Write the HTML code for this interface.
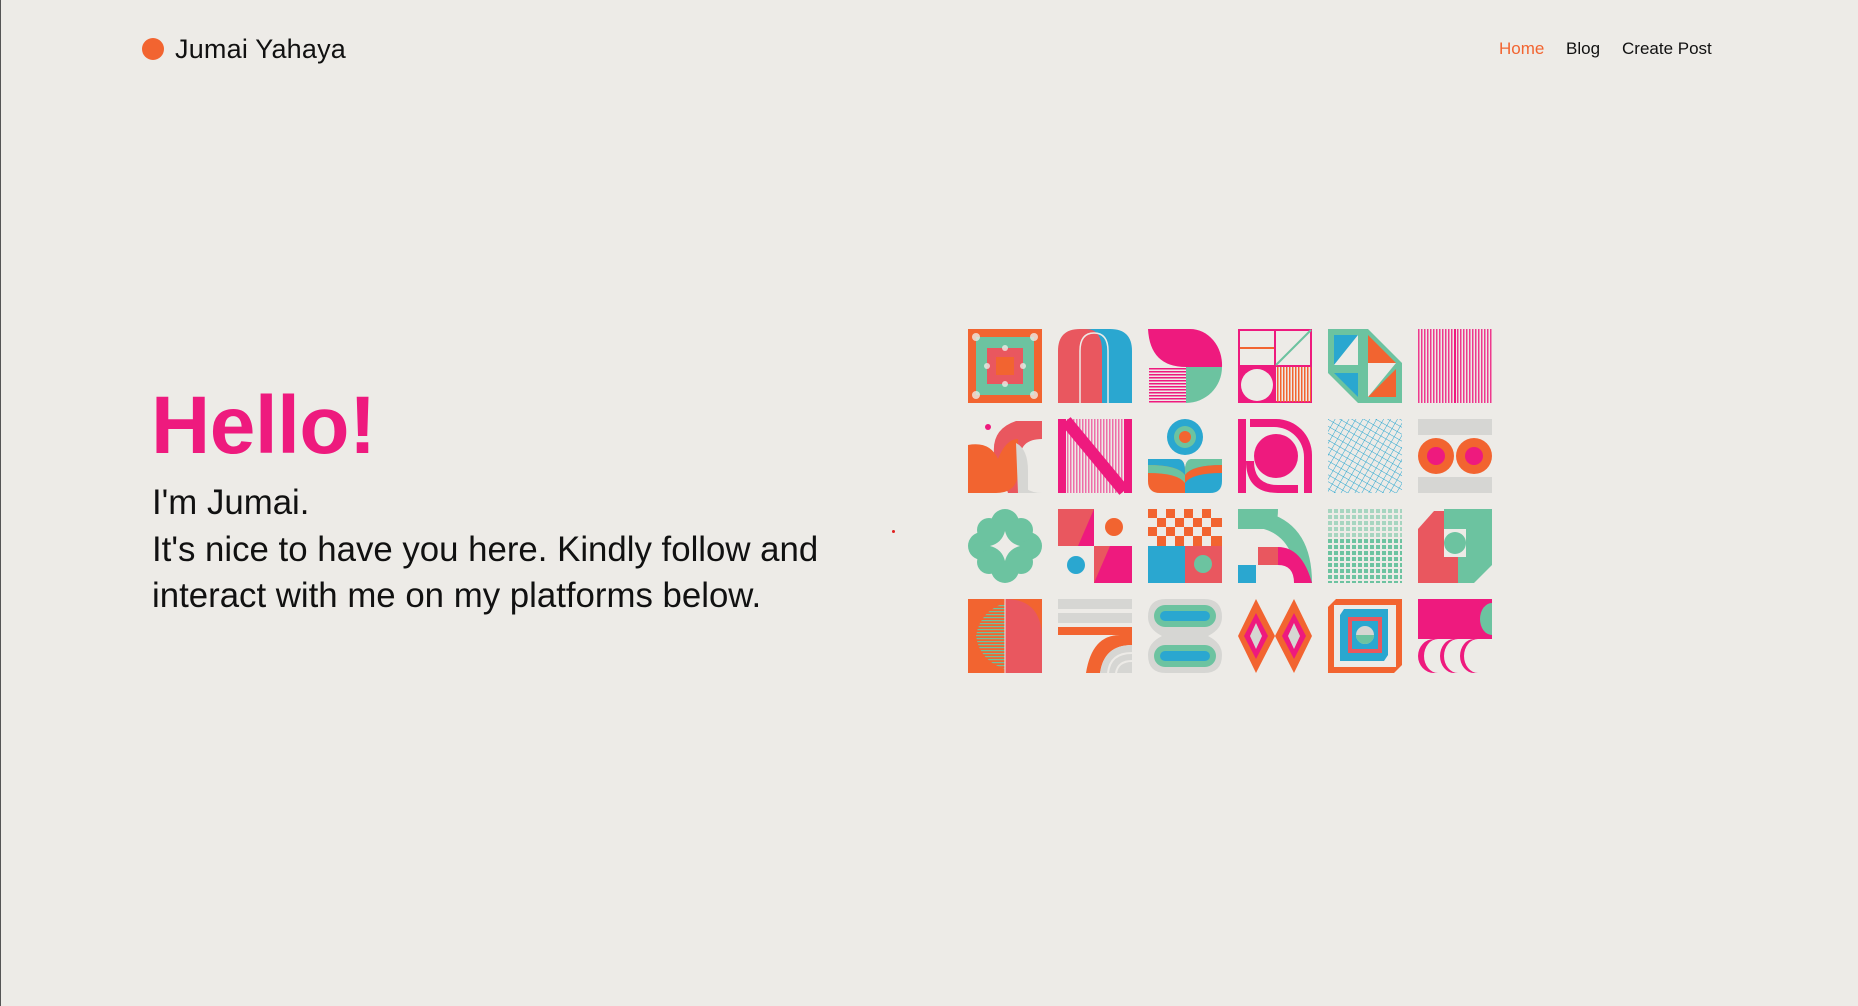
<!DOCTYPE html>
<html><head><meta charset="utf-8"><style>
html,body{margin:0;padding:0}
body{width:1858px;height:1006px;background:#edebe7;position:relative;overflow:hidden;font-family:"Liberation Sans",sans-serif;color:#111;border-left:1px solid #555;box-sizing:border-box}
.a{position:absolute;white-space:nowrap}
</style></head><body>
<div class="a" style="left:141px;top:38px;width:22px;height:22px;border-radius:50%;background:#f26430"></div>
<div class="a" style="left:174px;top:33px;font-size:27px;line-height:32px;letter-spacing:0.2px">Jumai Yahaya</div>
<div class="a" style="left:1498px;top:39px;font-size:17px;color:#f26430">Home</div>
<div class="a" style="left:1565px;top:39px;font-size:17px">Blog</div>
<div class="a" style="left:1621px;top:39px;font-size:17px">Create Post</div>
<div class="a" style="left:150px;top:381px;font-size:82px;font-weight:bold;color:#ee1a7e;letter-spacing:-0.5px;line-height:90px">Hello!</div>
<div class="a" style="left:151px;top:480px;font-size:34.8px;line-height:46.5px">I'm Jumai.<br>It's nice to have you here. Kindly follow and<br>interact with me on my platforms below.</div>
<div class="a" style="left:891px;top:530px;width:3px;height:3px;background:#e02020;border-radius:50%"></div>
<svg class="a" style="left:967px;top:329px" width="530" height="350" viewBox="0 0 530 350">
<defs>
<pattern id="hs" width="4" height="3" patternUnits="userSpaceOnUse"><rect width="4" height="1.5" fill="#ee1a7e"/></pattern>
<pattern id="vs" width="3" height="4" patternUnits="userSpaceOnUse"><rect width="1.5" height="4" fill="#ee1a7e"/></pattern>
<pattern id="vo" width="3" height="4" patternUnits="userSpaceOnUse"><rect width="1.5" height="4" fill="#f26430"/></pattern>
<pattern id="gd" width="6" height="6" patternUnits="userSpaceOnUse"><rect width="4" height="4" fill="#6cc3a0"/></pattern>
<pattern id="bx" width="6" height="6" patternUnits="userSpaceOnUse" patternTransform="rotate(30)"><path d="M0 0H6M0 0V6" stroke="#2aa7d0" stroke-width="1" fill="none"/></pattern>
<pattern id="ho" width="4" height="3" patternUnits="userSpaceOnUse"><rect width="4" height="1.2" fill="#6cc3a0"/></pattern>
</defs>
<!-- row 0 -->
<g><rect width="74" height="74" fill="#f26430"/><rect x="8" y="8" width="58" height="58" fill="#6cc3a0"/><rect x="19" y="19" width="36" height="36" fill="#e9575f"/><rect x="28" y="28" width="18" height="18" fill="#f26430"/>
<g fill="#edebe7" opacity=".8"><circle cx="8" cy="8" r="4"/><circle cx="66" cy="8" r="4"/><circle cx="8" cy="66" r="4"/><circle cx="66" cy="66" r="4"/><circle cx="37" cy="19" r="3"/><circle cx="37" cy="55" r="3"/><circle cx="19" cy="37" r="3"/><circle cx="55" cy="37" r="3"/></g></g>
<g transform="translate(90,0)"><path d="M22 0H52Q74 0 74 22V74H22Z" fill="#2aa7d0"/><path d="M0 74V22Q0 0 22 0H28Q44 0 44 22V74Z" fill="#e9575f"/><path d="M22 74V22Q22 4 36 4Q50 4 50 22V74" stroke="#edebe7" stroke-width="1.5" fill="none"/></g>
<g transform="translate(180,0)"><path d="M0 0H42A32 36 0 0 1 74 38H38Q2 38 0 0Z" fill="#ee1a7e"/><path d="M38 38H74A36 36 0 0 1 38 74Z" fill="#6cc3a0"/><rect x="1" y="38" width="37" height="36" fill="url(#hs)"/></g>
<g transform="translate(270,0)"><rect x="1" y="1" width="72" height="72" fill="#edebe7" stroke="#ee1a7e" stroke-width="2"/><path d="M37 0V74M0 37H74" stroke="#ee1a7e" stroke-width="2"/><rect x="1" y="37" width="36" height="36" fill="#ee1a7e"/><circle cx="19" cy="56" r="16" fill="#edebe7"/><rect x="38" y="38" width="35" height="35" fill="url(#vo)"/><path d="M38 36L73 1" stroke="#6cc3a0" stroke-width="2"/><path d="M2 19H36" stroke="#f26430" stroke-width="2"/></g>
<g transform="translate(360,0)"><path d="M0 0H40L74 34V74H30L0 44Z" fill="#6cc3a0"/><path d="M6 6H30L6 36Z" fill="#2aa7d0"/><path d="M40 6L68 34H40Z" fill="#f26430"/><path d="M6 44H30V68Z" fill="#2aa7d0"/><path d="M68 40V68H40Z" fill="#f26430"/><path d="M30 6L6 36H30ZM40 34H68L40 68Z" fill="#edebe7"/></g>
<g transform="translate(450,0)"><rect width="74" height="74" fill="url(#vs)" opacity=".85"/><path d="M37 0V74" stroke="#ee1a7e" stroke-width="2"/></g>
<!-- row 1 -->
<g transform="translate(0,90)"><path d="M44 74V30Q44 74 74 74Z" fill="#d6d6d3"/><path d="M40 74H52V40Q52 20 74 20V2H48Q24 10 26 34Z" fill="#e9575f"/><path d="M0 26Q22 22 30 40Q38 20 50 20V52Q50 74 28 74H0Z" fill="#f26430"/><path d="M48 24Q60 30 60 52V74H50Z" fill="#d6d6d3"/><circle cx="20" cy="8" r="3" fill="#ee1a7e"/></g>
<g transform="translate(90,90)"><rect width="74" height="74" fill="url(#vs)" opacity=".6"/><path d="M4 0V74M70 0V74" stroke="#ee1a7e" stroke-width="8"/><path d="M8 2L66 72" stroke="#ee1a7e" stroke-width="12"/></g>
<g transform="translate(180,90)"><circle cx="37" cy="18" r="18" fill="#2aa7d0"/><circle cx="37" cy="18" r="11" fill="#6cc3a0"/><circle cx="37" cy="18" r="6" fill="#f26430"/><path d="M0 40H30Q37 40 37 52V74H12Q0 74 0 62Z" fill="#f26430"/><path d="M0 40H30Q37 40 37 52V56Q30 46 0 46Z" fill="#2aa7d0"/><path d="M0 46Q30 46 37 56V64Q30 54 0 54Z" fill="#6cc3a0"/><path d="M74 40H44Q37 40 37 52V74H62Q74 74 74 62Z" fill="#2aa7d0"/><path d="M74 40H44Q37 40 37 52V56Q44 46 74 46Z" fill="#6cc3a0"/><path d="M74 46Q44 46 37 56V64Q44 54 74 54Z" fill="#f26430"/></g>
<g transform="translate(270,90)" fill="#ee1a7e"><rect x="0" y="0" width="8" height="74"/><path d="M12 0H38A36 36 0 0 1 74 36V74H66V38A30 30 0 0 0 36 8H12Z"/><path d="M8 42Q8 74 40 74H60V66H40Q16 66 16 42Z"/><circle cx="38" cy="37" r="22"/></g>
<g transform="translate(360,90)"><rect width="74" height="74" fill="url(#bx)"/></g>
<g transform="translate(450,90)"><rect y="0" width="74" height="16" fill="#d6d6d3"/><rect y="58" width="74" height="16" fill="#d6d6d3"/><circle cx="18" cy="37" r="18" fill="#f26430"/><circle cx="56" cy="37" r="18" fill="#f26430"/><circle cx="18" cy="37" r="9" fill="#ee1a7e"/><circle cx="56" cy="37" r="9" fill="#ee1a7e"/></g>
<!-- row 2 -->
<g transform="translate(0,180)"><g fill="#6cc3a0"><circle cx="37" cy="37" r="26"/><circle cx="37" cy="14" r="14"/><circle cx="37" cy="60" r="14"/><circle cx="14" cy="37" r="14"/><circle cx="60" cy="37" r="14"/><circle cx="21" cy="21" r="12"/><circle cx="53" cy="21" r="12"/><circle cx="21" cy="53" r="12"/><circle cx="53" cy="53" r="12"/></g><path d="M37 22Q40 34 52 37Q40 40 37 52Q34 40 22 37Q34 34 37 22Z" fill="#edebe7"/></g>
<g transform="translate(90,180)"><rect width="36" height="37" fill="#e9575f"/><path d="M36 0V37H20Z" fill="#ee1a7e"/><rect x="36" y="37" width="38" height="37" fill="#ee1a7e"/><path d="M36 37H52L36 74Z" fill="#e9575f"/><circle cx="56" cy="18" r="9" fill="#f26430"/><circle cx="18" cy="56" r="9" fill="#2aa7d0"/></g>
<g transform="translate(180,180)"><rect width="74" height="37" fill="#edebe7"/><g fill="#f26430"><rect x="0" y="0" width="9" height="9"/><rect x="18" y="0" width="9" height="9"/><rect x="36" y="0" width="9" height="9"/><rect x="54" y="0" width="9" height="9"/><rect x="9" y="9" width="9" height="9"/><rect x="27" y="9" width="9" height="9"/><rect x="45" y="9" width="9" height="9"/><rect x="63" y="9" width="11" height="9"/><rect x="0" y="18" width="9" height="9"/><rect x="18" y="18" width="9" height="9"/><rect x="36" y="18" width="9" height="9"/><rect x="54" y="18" width="9" height="9"/><rect x="9" y="27" width="9" height="10"/><rect x="27" y="27" width="9" height="10"/><rect x="45" y="27" width="9" height="10"/><rect x="63" y="27" width="11" height="10"/></g><rect y="37" width="37" height="37" fill="#2aa7d0"/><rect x="37" y="37" width="37" height="37" fill="#e9575f"/><circle cx="55" cy="55" r="9" fill="#6cc3a0"/></g>
<g transform="translate(270,180)"><path d="M0 0Q74 0 74 74H58Q58 30 26 20V0Z" fill="#6cc3a0"/><path d="M0 0V20H14Q24 20 26 20Q40 24 40 0Z" fill="#6cc3a0"/><rect x="20" y="38" width="20" height="18" fill="#e9575f"/><path d="M40 38Q64 38 74 74H56Q56 56 40 56Z" fill="#ee1a7e"/><rect x="0" y="56" width="18" height="18" fill="#2aa7d0"/></g>
<g transform="translate(360,180)"><rect width="74" height="74" fill="url(#gd)"/><rect width="74" height="30" fill="#edebe7" opacity=".45"/></g>
<g transform="translate(450,180)"><path d="M0 20L20 0H74V20Z" fill="#edebe7"/><path d="M0 20L16 2H40V74H0Z" fill="#e9575f"/><path d="M26 0H74V56L56 74H40V48H26Z" fill="#6cc3a0"/><path d="M26 20H48V48H26Z" fill="#edebe7"/><circle cx="37" cy="34" r="11" fill="#6cc3a0"/><rect x="26" y="48" width="14" height="26" fill="#e9575f"/></g>
<!-- row 3 -->
<g transform="translate(0,270)"><rect width="74" height="74" fill="#f26430"/><path d="M37 0Q74 0 74 40V74H37Z" fill="#e9575f"/><path d="M37 4Q12 12 8 37Q12 62 37 70Z" fill="url(#ho)"/><path d="M37 0V74" stroke="#edebe7" stroke-width="1"/></g>
<g transform="translate(90,270)"><rect y="0" width="74" height="10" fill="#d6d6d3"/><rect y="14" width="74" height="10" fill="#d6d6d3"/><rect y="28" width="74" height="8" fill="#f26430"/><path d="M74 36H62Q34 36 28 74H42Q46 46 74 46Z" fill="#f26430"/><path d="M74 46Q46 46 42 74H74Z" fill="#d6d6d3"/><path d="M74 54Q52 54 50 74M74 62Q60 62 58 74" stroke="#edebe7" stroke-width="2" fill="none"/></g>
<g transform="translate(180,270)"><path d="M0 18Q0 0 18 0H56Q74 0 74 18Q74 30 60 37Q74 44 74 56Q74 74 56 74H18Q0 74 0 56Q0 44 14 37Q0 30 0 18Z" fill="#d6d6d3"/><rect x="6" y="6" width="62" height="22" rx="11" fill="#6cc3a0"/><rect x="12" y="12" width="50" height="10" rx="5" fill="#2aa7d0"/><rect x="6" y="46" width="62" height="22" rx="11" fill="#6cc3a0"/><rect x="12" y="52" width="50" height="10" rx="5" fill="#2aa7d0"/></g>
<g transform="translate(270,270)"><path d="M18 0L37 37L18 74L0 37Z" fill="#f26430"/><path d="M56 0L74 37L56 74L37 37Z" fill="#f26430"/><path d="M18 14L30 37L18 60L6 37Z" fill="#ee1a7e"/><path d="M56 14L68 37L56 60L44 37Z" fill="#ee1a7e"/><path d="M18 24L24 37L18 50L12 37Z" fill="#d6d6d3"/><path d="M56 24L62 37L56 50L50 37Z" fill="#d6d6d3"/></g>
<g transform="translate(360,270)"><path d="M0 8L8 0H74V66L66 74H0Z" fill="#f26430"/><rect x="6" y="6" width="62" height="62" fill="#edebe7"/><path d="M12 16L16 10H60V56L56 62H12Z" fill="#2aa7d0"/><rect x="20" y="18" width="34" height="36" fill="#e9575f"/><rect x="24" y="22" width="26" height="28" fill="#2aa7d0"/><circle cx="37" cy="36" r="9" fill="#d6d6d3"/><path d="M28 36A9 9 0 0 0 46 36Z" fill="#6cc3a0"/></g>
<g transform="translate(450,270)"><rect width="74" height="74" fill="#ee1a7e"/><rect x="4" y="4" width="58" height="32" fill="url(#hs)" opacity=".5"/><path d="M74 4A12 16 0 0 0 74 36Z" fill="#6cc3a0"/><g fill="#edebe7"><path d="M0 40H16A16 17 0 0 0 16 74H0Z"/><path d="M20 40A14 17 0 0 0 20 74H36A14 17 0 0 1 36 40Z"/><path d="M40 40A14 17 0 0 0 40 74H56A14 17 0 0 1 56 40Z"/><path d="M60 40A14 17 0 0 0 60 74H74V40Z"/></g></g>
</svg>
</body></html>
